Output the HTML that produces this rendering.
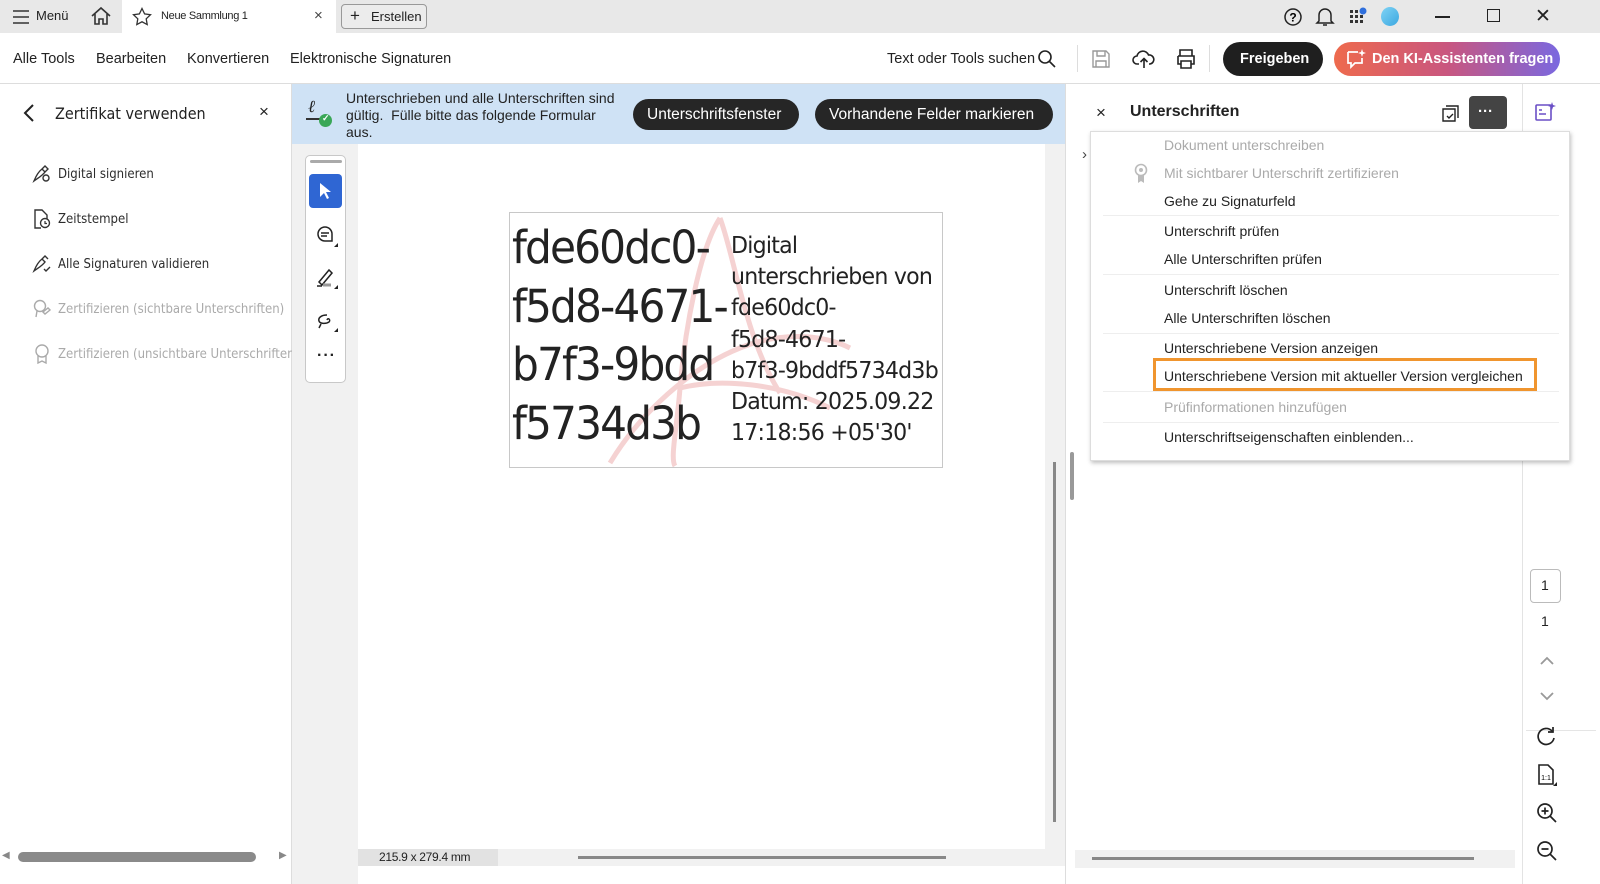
<!DOCTYPE html>
<html><head><meta charset="utf-8"><style>
*{box-sizing:border-box;margin:0;padding:0}
body{width:1600px;height:884px;overflow:hidden;background:#fff;font-family:"Liberation Sans",sans-serif;color:#222;position:relative}
.a{position:absolute}
.t{position:absolute;white-space:nowrap}
.mi{position:absolute;left:73px;font-size:14px;color:#222;white-space:nowrap}
.mi.d{color:#aaa}
.sep{position:absolute;left:12px;right:10px;height:1px;background:#eee}
.li{position:absolute;left:58px;font-size:13.5px;color:#2c2c2c;white-space:nowrap;font-family:'DejaVu Sans',sans-serif;transform:scaleX(.87);transform-origin:left}
.li.d{color:#aaa}
</style></head><body>
<!-- title bar -->
<div class="a" style="left:0;top:0;width:1600px;height:33px;background:#e8e8e8"></div>
<div class="a" style="left:122px;top:0;width:214px;height:33px;background:#fff"></div>
<svg class="a" style="left:12px;top:9px" width="18" height="16"><path d="M1 2h16M1 8h16M1 14h16" stroke="#333" stroke-width="1.6"/></svg>
<div class="t" style="left:36px;top:8px;font-size:13px">Menü</div>
<svg class="a" style="left:90px;top:6px" width="22" height="20"><path d="M2 10L11 2l9 8M5 8v10h4v-5h4v5h4V8" fill="none" stroke="#333" stroke-width="1.6"/></svg>
<svg class="a" style="left:132px;top:7px" width="20" height="19"><path d="M10 1.5l2.6 5.4 5.9.8-4.3 4.1 1 5.8L10 14.8l-5.2 2.8 1-5.8L1.5 7.7l5.9-.8z" fill="none" stroke="#333" stroke-width="1.3"/></svg>
<div class="t" style="left:161px;top:10px;font-size:11px;letter-spacing:-.3px">Neue Sammlung 1</div>
<div class="t" style="left:314px;top:7px;font-size:15px;color:#444">×</div>
<div class="a" style="left:341px;top:4px;width:86px;height:25px;border:1px solid #999;border-radius:4px;background:#ececec"></div>
<div class="t" style="left:350px;top:6px;font-size:17px">+</div>
<div class="t" style="left:371px;top:9px;font-size:13px">Erstellen</div>
<svg class="a" style="left:1283px;top:7px" width="20" height="20"><circle cx="10" cy="10" r="8" fill="none" stroke="#222" stroke-width="1.5"/><text x="10" y="14.5" font-size="12" text-anchor="middle" font-family="Liberation Sans" font-weight="bold">?</text></svg>
<svg class="a" style="left:1315px;top:6px" width="20" height="21"><path d="M4 15V9a6 6 0 0112 0v6l2 2H2zM8 19h4" fill="none" stroke="#222" stroke-width="1.5"/></svg>
<svg class="a" style="left:1349px;top:7px" width="20" height="18"><g fill="#333"><rect x="1" y="3" width="3" height="3"/><rect x="6" y="3" width="3" height="3"/><rect x="1" y="8" width="3" height="3"/><rect x="6" y="8" width="3" height="3"/><rect x="11" y="8" width="3" height="3"/><rect x="1" y="13" width="3" height="3"/><rect x="6" y="13" width="3" height="3"/><rect x="11" y="13" width="3" height="3"/></g><circle cx="14" cy="4" r="3.5" fill="#2f6fdc"/></svg>
<div class="a" style="left:1381px;top:7px;width:18px;height:19px;border-radius:50%;background:linear-gradient(135deg,#7fd3f5,#3ba7e0)"></div>
<div class="a" style="left:1435px;top:16px;width:15px;height:1.5px;background:#222"></div>
<div class="a" style="left:1487px;top:9px;width:13px;height:13px;border:1.5px solid #222"></div>
<div class="t" style="left:1535px;top:5px;font-size:19px;color:#222">✕</div>
<!-- toolbar -->
<div class="a" style="left:0;top:83px;width:1600px;height:1px;background:#ddd"></div>
<div class="t" style="left:13px;top:51px;font-size:14.5px">Alle Tools</div>
<div class="t" style="left:96px;top:51px;font-size:14.5px">Bearbeiten</div>
<div class="t" style="left:187px;top:51px;font-size:14.5px">Konvertieren</div>
<div class="t" style="left:290px;top:51px;font-size:14.5px">Elektronische Signaturen</div>
<div class="t" style="left:887px;top:51px;font-size:14.5px">Text oder Tools suchen</div>
<svg class="a" style="left:1037px;top:49px" width="20" height="20"><circle cx="8" cy="8" r="6" fill="none" stroke="#222" stroke-width="1.6"/><path d="M12.5 12.5l5.5 5.5" stroke="#222" stroke-width="1.6"/></svg>
<div class="a" style="left:1077px;top:45px;width:1px;height:27px;background:#ddd"></div>
<svg class="a" style="left:1091px;top:49px" width="20" height="20"><path d="M2 2h13l3 3v13H2z M6 2v5h8V2 M5 18v-6h10v6" fill="none" stroke="#999" stroke-width="1.4"/></svg>
<svg class="a" style="left:1132px;top:47px" width="24" height="24"><path d="M7 17H5a4 4 0 010-8 6 6 0 0111.5-1A4.5 4.5 0 0118 17h-1M12 21v-9M8.5 15l3.5-3.5 3.5 3.5" fill="none" stroke="#222" stroke-width="1.6"/></svg>
<svg class="a" style="left:1175px;top:48px" width="22" height="22"><path d="M5 8V2h12v6M3 8h16v8h-3M6 16H3V8M6 13h10v7H6z" fill="none" stroke="#222" stroke-width="1.6"/></svg>
<div class="a" style="left:1209px;top:45px;width:1px;height:27px;background:#ddd"></div>
<div class="a" style="left:1223px;top:42px;width:100px;height:34px;border-radius:17px;background:#1f1f1f"></div>
<div class="t" style="left:1240px;top:51px;font-size:14.5px;font-weight:bold;color:#fff">Freigeben</div>
<div class="a" style="left:1334px;top:42px;width:226px;height:34px;border-radius:17px;background:linear-gradient(90deg,#ee6a4d,#c9567f 50%,#7a68e0)"></div>
<svg class="a" style="left:1345px;top:48px" width="22" height="22"><path d="M3 4h10M3 4v11h3v4l4-4h7v-5" fill="none" stroke="#fff" stroke-width="1.7"/><path d="M17 1l1 3 3 1-3 1-1 3-1-3-3-1 3-1z" fill="#fff"/></svg>
<div class="t" style="left:1372px;top:51px;font-size:14.5px;font-weight:bold;color:#fff">Den KI-Assistenten fragen</div>
<!-- left panel -->
<div class="a" style="left:291px;top:84px;width:1px;height:800px;background:#ddd"></div>
<svg class="a" style="left:22px;top:103px" width="14" height="20"><path d="M11 2L3 10l8 8" fill="none" stroke="#222" stroke-width="2"/></svg>
<div class="t" style="left:55px;top:104px;font-size:16px;font-family:'DejaVu Sans',sans-serif;transform:scaleX(.9);transform-origin:left">Zertifikat verwenden</div>
<div class="t" style="left:259px;top:102px;font-size:17px">×</div>
<svg class="a" style="left:31px;top:163px" width="22" height="22"><path d="M3 18c2-5 4-9 8-12l3 3c-3 4-7 6-11 9zM11 6l3-3 3 3-3 3" fill="none" stroke="#333" stroke-width="1.4"/><circle cx="15" cy="15" r="3" fill="none" stroke="#333" stroke-width="1.4"/></svg>
<div class="li" style="top:166px">Digital signieren</div>
<svg class="a" style="left:32px;top:208px" width="20" height="22"><path d="M9 20H3V2h7l5 5v4" fill="none" stroke="#333" stroke-width="1.4"/><circle cx="13" cy="15" r="4.5" fill="none" stroke="#333" stroke-width="1.4"/><path d="M13 13v2.5h2" stroke="#333" stroke-width="1.2" fill="none"/></svg>
<div class="li" style="top:211px">Zeitstempel</div>
<svg class="a" style="left:31px;top:253px" width="22" height="22"><path d="M3 18c2-5 4-9 8-12l3 3c-3 4-7 6-11 9zM11 6l3-3 3 3M13 16l2 2 4-4" fill="none" stroke="#333" stroke-width="1.4"/></svg>
<div class="li" style="top:256px">Alle Signaturen validieren</div>
<svg class="a" style="left:31px;top:298px" width="22" height="22"><circle cx="9" cy="8" r="5.5" fill="none" stroke="#aaa" stroke-width="1.4"/><path d="M6 13l-1 6M12 14l5-4 2 2-5 4z" fill="none" stroke="#aaa" stroke-width="1.4"/></svg>
<div class="li d" style="top:301px">Zertifizieren (sichtbare Unterschriften)</div>
<svg class="a" style="left:32px;top:343px" width="20" height="22"><circle cx="10" cy="8" r="6" fill="none" stroke="#aaa" stroke-width="1.4"/><path d="M6 13v7l4-2 4 2v-7" fill="none" stroke="#aaa" stroke-width="1.4"/></svg>
<div class="li d" style="top:346px">Zertifizieren (unsichtbare Unterschriften</div>
<div class="a" style="left:18px;top:852px;width:238px;height:10px;border-radius:5px;background:#8a8a8a"></div>
<div class="t" style="left:2px;top:850px;font-size:10px;color:#888">◀</div>
<div class="t" style="left:279px;top:850px;font-size:10px;color:#888">▶</div>
<!-- doc area -->
<div class="a" style="left:292px;top:144px;width:66px;height:740px;background:#f1f1f1"></div>
<div class="a" style="left:1045px;top:144px;width:20px;height:740px;background:#f1f1f1"></div>
<div class="a" style="left:1053px;top:462px;width:3px;height:360px;background:#888"></div>
<div class="a" style="left:358px;top:849px;width:687px;height:17px;background:#f1f1f1"></div>
<div class="a" style="left:358px;top:849px;width:140px;height:17px;background:#e2e2e2"></div>
<div class="t" style="left:379px;top:850px;font-size:12px;letter-spacing:-.3px">215.9 x 279.4 mm</div>
<div class="a" style="left:578px;top:856px;width:368px;height:3px;background:#888"></div>
<div class="a" style="left:358px;top:866px;width:707px;height:18px;background:#fff"></div>
<!-- banner -->
<div class="a" style="left:292px;top:84px;width:773px;height:60px;background:#cfe2f5"></div>
<div class="t" style="left:308px;top:97px;font-size:17px;font-style:italic;font-family:'Liberation Serif',serif">&#x2113;</div>
<div class="a" style="left:306px;top:118px;width:14px;height:1.5px;background:#333"></div>
<div class="a" style="left:319px;top:114px;width:13px;height:13px;border-radius:50%;background:#3aa757"></div>
<div class="t" style="left:322px;top:113px;font-size:9px;color:#fff;font-weight:bold">✓</div>
<div class="t" style="left:346px;top:90px;font-size:14px;line-height:17px;white-space:normal;width:276px">Unterschrieben und alle Unterschriften sind gültig.&nbsp; Fülle bitte das folgende Formular aus.</div>
<div class="a" style="left:633px;top:99px;width:166px;height:31px;border-radius:16px;background:#262626"></div>
<div class="t" style="left:647px;top:106px;font-size:15.5px;color:#fff">Unterschriftsfenster</div>
<div class="a" style="left:815px;top:99px;width:238px;height:31px;border-radius:16px;background:#262626"></div>
<div class="t" style="left:829px;top:106px;font-size:15.5px;color:#fff">Vorhandene Felder markieren</div>
<!-- tool strip -->
<div class="a" style="left:305px;top:155px;width:41px;height:228px;border:1px solid #c8c8c8;border-radius:5px;background:#fff"></div>
<div class="a" style="left:310px;top:160px;width:32px;height:3px;border-radius:2px;background:#aaa"></div>
<div class="a" style="left:309px;top:174px;width:33px;height:34px;border-radius:4px;background:#2f66d3"></div>
<svg class="a" style="left:318px;top:182px" width="14" height="18"><path d="M2 1v14l4-4 3 6 2-1-3-6h5z" fill="#fff"/></svg>
<svg class="a" style="left:315px;top:224px" width="24" height="24"><path d="M10 3a7 7 0 100 14h7v-7a7 7 0 00-7-7zM6 9h8M6 12h6" fill="none" stroke="#222" stroke-width="1.5"/><path d="M23 19v4h-4z" fill="#222"/></svg>
<svg class="a" style="left:315px;top:266px" width="24" height="24"><path d="M4 16L14 4l3 3L7 19zM2 20h5" fill="none" stroke="#222" stroke-width="1.5"/><path d="M8 19h8" stroke="#999" stroke-width="3"/><path d="M23 19v4h-4z" fill="#222"/></svg>
<svg class="a" style="left:315px;top:309px" width="24" height="24"><path d="M12 6c-6 0-9 3-8 6 1 3 7 3 10 1 2-2-1-5-2-2M6 15l-2 4" fill="none" stroke="#222" stroke-width="1.5"/><path d="M23 19v4h-4z" fill="#222"/></svg>
<div class="t" style="left:317px;top:347px;font-size:16px;font-weight:bold;letter-spacing:1px">···</div>
<!-- signature box -->
<div class="a" style="left:509px;top:212px;width:434px;height:256px;border:1px solid #c8c8c8;background:#fff;overflow:hidden">
<svg class="a" style="left:0;top:0" width="434" height="256"><path d="M210 5c-20 30-35 110-40 170-3 40-10 70-5 78 M210 5c15 40 25 120 60 175 M100 250c30-50 80-95 130-115 50-20 90-10 110 0 M170 175c40-10 100-5 150 20" fill="none" stroke="#f5d2d2" stroke-width="5"/></svg>
<div class="t" style="left:2px;top:6px;font-size:45px;line-height:58.5px;font-family:'DejaVu Sans',sans-serif;letter-spacing:-2px;transform:scaleX(.94);transform-origin:left">fde60dc0-<br>f5d8-4671-<br>b7f3-9bdd<br>f5734d3b</div>
<div class="t" style="left:221px;top:18px;font-size:23px;line-height:31.2px;font-family:'DejaVu Sans',sans-serif;letter-spacing:-.8px;transform:scaleX(.96);transform-origin:left">Digital<br>unterschrieben von<br>fde60dc0-<br>f5d8-4671-<br>b7f3-9bddf5734d3b<br>Datum: 2025.09.22<br>17:18:56 +05'30'</div>
</div>
<!-- right panel -->
<div class="a" style="left:1065px;top:84px;width:1px;height:800px;background:#ddd"></div>
<div class="a" style="left:1070px;top:452px;width:4px;height:48px;background:#999;border-radius:2px"></div>
<div class="t" style="left:1096px;top:103px;font-size:17px">×</div>
<div class="t" style="left:1130px;top:103px;font-size:16px;font-weight:bold">Unterschriften</div>
<svg class="a" style="left:1439px;top:102px" width="22" height="22"><path d="M7 4h12v12M4 7h12v12H4z" fill="none" stroke="#222" stroke-width="1.4"/><path d="M8 14l2 2 4-4" fill="none" stroke="#222" stroke-width="1.4"/></svg>
<div class="a" style="left:1469px;top:96px;width:38px;height:33px;border-radius:4px;background:#444"></div>
<div class="t" style="left:1478px;top:103px;font-size:15px;color:#fff;font-weight:bold">···</div>
<div class="t" style="left:1082px;top:146px;font-size:15px;color:#444">›</div>
<div class="a" style="left:1075px;top:850px;width:440px;height:18px;background:#f1f1f1"></div>
<div class="a" style="left:1092px;top:857px;width:382px;height:3px;background:#888"></div>
<!-- right rail -->
<div class="a" style="left:1522px;top:84px;width:1px;height:800px;background:#e3e3e3"></div>
<svg class="a" style="left:1534px;top:101px" width="22" height="22"><rect x="2" y="4" width="15" height="15" rx="1" fill="none" stroke="#6a4fc6" stroke-width="1.6"/><path d="M5 9h3M5 13h7" stroke="#6a4fc6" stroke-width="1.6"/><path d="M18 1l1 3 3 1-3 1-1 3-1-3-3-1 3-1z" fill="#6a4fc6"/></svg>
<div class="a" style="left:1530px;top:569px;width:31px;height:34px;border:1px solid #bbb;border-radius:4px"></div>
<div class="t" style="left:1541px;top:577px;font-size:14px">1</div>
<div class="t" style="left:1541px;top:613px;font-size:14px">1</div>
<svg class="a" style="left:1539px;top:655px" width="16" height="12"><path d="M2 9l6-6 6 6" fill="none" stroke="#999" stroke-width="1.8"/></svg>
<svg class="a" style="left:1539px;top:690px" width="16" height="12"><path d="M2 3l6 6 6-6" fill="none" stroke="#999" stroke-width="1.8"/></svg>
<div class="a" style="left:1526px;top:730px;width:70px;height:1px;background:#e5e5e5"></div>
<svg class="a" style="left:1535px;top:725px" width="22" height="22"><path d="M17 6a8 8 0 10 2 7" fill="none" stroke="#222" stroke-width="1.7"/><path d="M18 2v5h-5" fill="none" stroke="#222" stroke-width="1.7"/></svg>
<svg class="a" style="left:1536px;top:763px" width="22" height="24"><path d="M3 2h9l5 5v14H3z" fill="none" stroke="#222" stroke-width="1.6"/><text x="10" y="17" font-size="7" text-anchor="middle" font-family="Liberation Sans">1:1</text><path d="M21 19v4h-4z" fill="#222"/></svg>
<svg class="a" style="left:1536px;top:802px" width="22" height="22"><circle cx="9" cy="9" r="7" fill="none" stroke="#222" stroke-width="1.7"/><path d="M14 14l6 6M9 5.5v7M5.5 9h7" stroke="#222" stroke-width="1.7"/></svg>
<svg class="a" style="left:1536px;top:840px" width="22" height="22"><circle cx="9" cy="9" r="7" fill="none" stroke="#222" stroke-width="1.7"/><path d="M14 14l6 6M5.5 9h7" stroke="#222" stroke-width="1.7"/></svg>
<!-- dropdown -->
<div class="a" style="left:1090px;top:131px;width:480px;height:330px;background:#fff;border:1px solid #ddd;box-shadow:1px 2px 4px rgba(0,0,0,.25)">
<div class="mi d" style="top:5px">Dokument unterschreiben</div>
<svg class="a" style="left:42px;top:31px" width="16" height="22"><circle cx="8" cy="7" r="5.5" fill="none" stroke="#bbb" stroke-width="1.6"/><circle cx="8" cy="7" r="2" fill="#bbb"/><path d="M5 12v8l3-2 3 2v-8" fill="#bbb"/></svg>
<div class="mi d" style="top:33px">Mit sichtbarer Unterschrift zertifizieren</div>
<div class="mi" style="top:61px">Gehe zu Signaturfeld</div>
<div class="sep" style="top:83px"></div>
<div class="mi" style="top:91px">Unterschrift prüfen</div>
<div class="mi" style="top:119px">Alle Unterschriften prüfen</div>
<div class="sep" style="top:142px"></div>
<div class="mi" style="top:150px">Unterschrift löschen</div>
<div class="mi" style="top:178px">Alle Unterschriften löschen</div>
<div class="sep" style="top:201px"></div>
<div class="mi" style="top:208px">Unterschriebene Version anzeigen</div>
<div class="a" style="left:62px;top:226px;width:384px;height:33px;border:3px solid #f0952e"></div>
<div class="mi" style="top:236px">Unterschriebene Version mit aktueller Version vergleichen</div>
<div class="sep" style="top:259px"></div>
<div class="mi d" style="top:267px">Prüfinformationen hinzufügen</div>
<div class="sep" style="top:290px"></div>
<div class="mi" style="top:297px">Unterschriftseigenschaften einblenden...</div>
</div>
</body></html>
